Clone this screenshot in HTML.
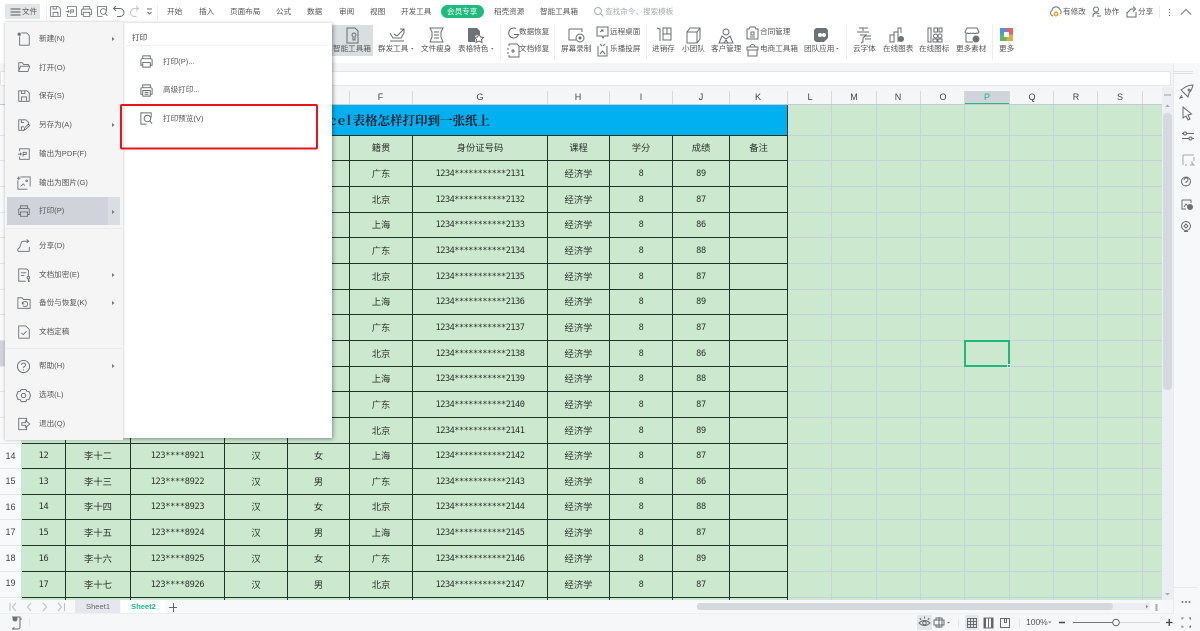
<!DOCTYPE html>
<html lang="zh"><head><meta charset="utf-8"><title>WPS 表格</title>
<style>
*{box-sizing:border-box}
html,body{margin:0;padding:0;width:1200px;height:631px;overflow:hidden;background:#f6f7f9;font-family:"Liberation Sans","Noto Sans CJK SC",sans-serif;color:#555}
#root{position:absolute;left:0;top:0;width:1200px;height:631px;overflow:hidden;filter:blur(.3px)}
.a{position:absolute}
.t{position:absolute;white-space:nowrap;line-height:12px;font-size:7.6px;color:#555}
#sheet{position:absolute;left:0;top:87px;width:1162px;height:513px;overflow:hidden}
table{position:absolute;left:22px;top:18px;border-collapse:separate;border-spacing:0;table-layout:fixed;width:666px;background:#cce8cf}
td{border-right:1px solid #1f3328;border-bottom:1px solid #1f3328;padding:0;text-align:center;font-size:9.3px;color:#2a332c;line-height:12px;overflow:hidden;white-space:nowrap}
td.n{font-family:"DejaVu Sans Mono",monospace;font-size:8.6px;letter-spacing:-.5px}
td.m{font-family:"DejaVu Sans Mono",monospace;font-size:8.6px;letter-spacing:-.3px}
.cap{position:absolute;top:4px;text-align:center;font-size:9px;line-height:12px;color:#444;transform:translateX(-50%)}
.rn{position:absolute;left:0;width:21px;text-align:center;font-size:9px;color:#444;line-height:12px}
svg{position:absolute;left:0;top:0;overflow:visible}
.i{fill:none;stroke:#686c71;stroke-width:1}
</style></head><body>
<div id="root">
<svg width="0" height="0" style="position:absolute">
<defs>
<symbol id="save" viewBox="0 0 16 16" overflow="visible"><path class="i" d="M2 2h9.500L14 4.500V14H2zM5 14V9h6v5M5 2v3h4V2"/></symbol>
<symbol id="print" viewBox="0 0 16 16" overflow="visible"><path class="i" d="M4 5V2h8v3M4 12H2V6.500Q2 5 3.500 5h9Q14 5 14 6.500V12h-2M4 9h8v5H4z"/></symbol>
<symbol id="prev" viewBox="0 0 16 16" overflow="visible"><path class="i" d="M13 7V2H2v12h6"/><circle class="i" cx="9" cy="8" r="3.500"/><path class="i" d="M11.500 10.500L14 13.500"/></symbol>
<symbol id="pdf" viewBox="0 0 16 16" overflow="visible"><path class="i" d="M3 5V2h11v12H3v-3M1 8h4M3.500 6.500L5 8l-1.500 1.500M7 11V6h3.500v2.500H7"/></symbol>
<symbol id="open" viewBox="0 0 16 16" overflow="visible"><path class="i" d="M2 13V3h4l1.500 2H13v2M2 13l2-6h10.500l-2 6z"/></symbol>
<symbol id="saveas" viewBox="0 0 16 16" overflow="visible"><path class="i" d="M8 14H2V2h8l3 3v2M5 14v-4h3M5 2v3h3M8 14l1-3 4-4 1.500 1.500-4 4z"/></symbol>
<symbol id="new" viewBox="0 0 16 16" overflow="visible"><path class="i" d="M5 1h6l3 3v11H3V5M1 1l3 3M4 1L1 4M2.500 .5v4M.5 2.500h4"/></symbol>
<symbol id="img" viewBox="0 0 16 16" overflow="visible"><path class="i" d="M4 1h11v11M1 5v10h11M4 12l3-3 2 2M11 4.500a1 1 0 1 0 .1 0M0 2.500h4M2 .5v4"/></symbol>
<symbol id="share" viewBox="0 0 16 16" overflow="visible"><path class="i" d="M1 14v-2q0-1.500 2-2l2-6q.5-1.500 3-1.500h5M11 .5L13.500 2.500 11 4.500M14 9v5H1"/></symbol>
<symbol id="lock" viewBox="0 0 16 16" overflow="visible"><path class="i" d="M10 15H2V1h9l2 2v6M4.500 5.500h6M4.500 8.500h4"/><circle class="i" cx="13" cy="11" r="1.500"/><path class="i" d="M13 12.500V15.500h1.500M13 14h1.500"/></symbol>
<symbol id="bak" viewBox="0 0 16 16" overflow="visible"><path class="i" d="M1 14V2h5l1.500 2H15v10zM6 6.500v2.500h2.500M6.200 9a3 3 0 1 1 .6 2"/></symbol>
<symbol id="final" viewBox="0 0 16 16" overflow="visible"><path class="i" d="M2 1h8l4 4v10H2zM5 9l2 2 4-4"/></symbol>
<symbol id="help" viewBox="0 0 16 16" overflow="visible"><circle class="i" cx="8" cy="8" r="6.500"/><path class="i" d="M5.800 6.300Q6 4.300 8 4.300q2.200 0 2.200 2 0 1.200-1.200 1.800-1 .5-1 1.600M8 11v1.200"/></symbol>
<symbol id="gear" viewBox="0 0 16 16" overflow="visible"><path class="i" d="M5.500 1.500h5l1 2 2.300.2L15.500 8l-1.700 4.300-2.300.2-1 2h-5l-1-2-2.300-.2L.5 8l1.700-4.300 2.300-.2z"/><circle class="i" cx="8" cy="8" r="2.300"/></symbol>
<symbol id="exit" viewBox="0 0 16 16" overflow="visible"><path class="i" d="M11 5V1.500H2v13h9V11M5.500 6.500h4.500V4l4.500 4-4.500 4V9.500H5.500z"/></symbol>
<symbol id="adv" viewBox="0 0 16 16" overflow="visible"><path class="i" d="M4 5V2h8v3M4 12H2V6.500Q2 5 3.500 5h9Q14 5 14 6.500V12h-2M4 8h8v6H4zM6 10h4M6 12h4"/></symbol>
</defs></svg>

<!-- SHEET -->
<div id="sheet">
<div class="a" style="left:0;top:0;width:1162px;height:18px;background:#f5f6f7"></div>
<div class="a" style="left:0;top:18px;width:21px;height:495px;background:#f8f9fa"></div>
<div class="a" style="left:21px;top:18px;width:1141px;height:495px;background:#cce8cf"></div>
<div class="a" style="left:0;top:253px;width:21px;height:26px;background:#d0d3da"></div>
<div class="a" style="left:965px;top:4px;width:44px;height:13px;background:#d0d3da"></div>
<div class="a" style="left:965px;top:16px;width:44px;height:2px;background:#1fbb7d"></div>
<div class="cap" style="left:380.500px">F</div><div class="cap" style="left:480px">G</div><div class="cap" style="left:578px">H</div><div class="cap" style="left:641px">I</div><div class="cap" style="left:701px">J</div><div class="cap" style="left:758px">K</div><div class="cap" style="left:810px">L</div><div class="cap" style="left:854px">M</div><div class="cap" style="left:898px">N</div><div class="cap" style="left:943px">O</div><div class="cap" style="left:987px;color:#1fbb7d">P</div><div class="cap" style="left:1032px">Q</div><div class="cap" style="left:1076px">R</div><div class="cap" style="left:1120px">S</div>

<svg width="1162" height="513" viewBox="0 87 1162 513">
<g stroke="#d5d8dd" stroke-width="1">
<path d="M349.500 91v13M412.500 91v13M547.500 91v13M609.500 91v13M672.500 91v13M729.500 91v13M787.500 91v13M831.500 91v13M876.500 91v13M920.500 91v13M964.500 91v13M1009.500 91v13M1053.500 91v13M1097.500 91v13M1142.500 91v13"/>
<path d="M0 104.500h1162" stroke="#c4c9d2"/>
<path d="M0 135.500h21M0 160.500h21M0 186.500h21M0 212.500h21M0 237.500h21M0 263.500h21M0 289.500h21M0 314.500h21M0 340.500h21M0 366.500h21M0 391.500h21M0 417.500h21M0 443.500h21M0 468.500h21M0 494.500h21M0 519.500h21M0 545.500h21M0 571.500h21M0 597.500h21" stroke="#e4e6e9"/>
</g>
<g stroke="#c5d2dd" stroke-width="1">
<path d="M831.500 105v495M876.500 105v495M920.500 105v495M964.500 105v495M1009.500 105v495M1053.500 105v495M1097.500 105v495M1142.500 105v495"/>
<path d="M788 135.500h374M788 160.500h374M788 186.500h374M788 212.500h374M788 237.500h374M788 263.500h374M788 289.500h374M788 314.500h374M788 340.500h374M788 366.500h374M788 391.500h374M788 417.500h374M788 443.500h374M788 468.500h374M788 494.500h374M788 519.500h374M788 545.500h374M788 571.500h374M788 597.500h374"/>
</g>
</svg>

<table>
<colgroup><col style="width:44px"><col style="width:65px"><col style="width:94px"><col style="width:63px"><col style="width:62px"><col style="width:63px"><col style="width:135px"><col style="width:62px"><col style="width:63px"><col style="width:57px"><col style="width:58px"></colgroup>
<tr style="height:31px"><td colspan="11" style="background:#00b0f0"></td></tr>
<tr style="height:25px"><td></td><td></td><td></td><td></td><td></td><td>籍贯</td><td>身份证号码</td><td>课程</td><td>学分</td><td>成绩</td><td>备注</td></tr>
<tr style="height:26px"><td></td><td></td><td></td><td></td><td></td><td>广东</td><td class="n">1234***********2131</td><td>经济学</td><td class="m">8</td><td class="m">89</td><td></td></tr>
<tr style="height:26px"><td></td><td></td><td></td><td></td><td></td><td>北京</td><td class="n">1234***********2132</td><td>经济学</td><td class="m">8</td><td class="m">87</td><td></td></tr>
<tr style="height:25px"><td></td><td></td><td></td><td></td><td></td><td>上海</td><td class="n">1234***********2133</td><td>经济学</td><td class="m">8</td><td class="m">86</td><td></td></tr>
<tr style="height:26px"><td></td><td></td><td></td><td></td><td></td><td>广东</td><td class="n">1234***********2134</td><td>经济学</td><td class="m">8</td><td class="m">88</td><td></td></tr>
<tr style="height:26px"><td></td><td></td><td></td><td></td><td></td><td>北京</td><td class="n">1234***********2135</td><td>经济学</td><td class="m">8</td><td class="m">87</td><td></td></tr>
<tr style="height:25px"><td></td><td></td><td></td><td></td><td></td><td>上海</td><td class="n">1234***********2136</td><td>经济学</td><td class="m">8</td><td class="m">89</td><td></td></tr>
<tr style="height:26px"><td></td><td></td><td></td><td></td><td></td><td>广东</td><td class="n">1234***********2137</td><td>经济学</td><td class="m">8</td><td class="m">87</td><td></td></tr>
<tr style="height:26px"><td></td><td></td><td></td><td></td><td></td><td>北京</td><td class="n">1234***********2138</td><td>经济学</td><td class="m">8</td><td class="m">86</td><td></td></tr>
<tr style="height:25px"><td></td><td></td><td></td><td></td><td></td><td>上海</td><td class="n">1234***********2139</td><td>经济学</td><td class="m">8</td><td class="m">88</td><td></td></tr>
<tr style="height:26px"><td></td><td></td><td></td><td></td><td></td><td>广东</td><td class="n">1234***********2140</td><td>经济学</td><td class="m">8</td><td class="m">87</td><td></td></tr>
<tr style="height:26px"><td></td><td></td><td></td><td></td><td></td><td>北京</td><td class="n">1234***********2141</td><td>经济学</td><td class="m">8</td><td class="m">89</td><td></td></tr>
<tr style="height:25px"><td class="m">12</td><td>李十二</td><td class="m">123****8921</td><td>汉</td><td>女</td><td>上海</td><td class="n">1234***********2142</td><td>经济学</td><td class="m">8</td><td class="m">87</td><td></td></tr>
<tr style="height:26px"><td class="m">13</td><td>李十三</td><td class="m">123****8922</td><td>汉</td><td>男</td><td>广东</td><td class="n">1234***********2143</td><td>经济学</td><td class="m">8</td><td class="m">86</td><td></td></tr>
<tr style="height:25px"><td class="m">14</td><td>李十四</td><td class="m">123****8923</td><td>汉</td><td>女</td><td>北京</td><td class="n">1234***********2144</td><td>经济学</td><td class="m">8</td><td class="m">88</td><td></td></tr>
<tr style="height:26px"><td class="m">15</td><td>李十五</td><td class="m">123****8924</td><td>汉</td><td>男</td><td>上海</td><td class="n">1234***********2145</td><td>经济学</td><td class="m">8</td><td class="m">87</td><td></td></tr>
<tr style="height:26px"><td class="m">16</td><td>李十六</td><td class="m">123****8925</td><td>汉</td><td>女</td><td>广东</td><td class="n">1234***********2146</td><td>经济学</td><td class="m">8</td><td class="m">89</td><td></td></tr>
<tr style="height:26px"><td class="m">17</td><td>李十七</td><td class="m">123****8926</td><td>汉</td><td>男</td><td>北京</td><td class="n">1234***********2147</td><td>经济学</td><td class="m">8</td><td class="m">87</td><td></td></tr>
<tr style="height:26px"><td></td><td></td><td></td><td></td><td></td><td></td><td></td><td></td><td></td><td></td><td></td></tr>
</table>
<div class="a" style="left:200px;width:290px;text-align:right;top:24px;white-space:nowrap;font-family:'Noto Serif CJK SC','Liberation Serif',serif;font-weight:700;font-size:12.500px;line-height:18px;color:#0b1a22"><span style="letter-spacing:1.600px">Excel</span>表格怎样打印到一张纸上</div>
<div class="a" style="left:964px;top:253px;width:46px;height:27px;border:2px solid #1db87b"></div>
<div class="a" style="left:1007px;top:277px;width:4px;height:4px;background:#1db87b;border:1px solid #dff3e5"></div>
<div class="rn" style="top:363px">14</div><div class="rn" style="top:388px">15</div><div class="rn" style="top:414px">16</div><div class="rn" style="top:439px">17</div><div class="rn" style="top:465px">18</div><div class="rn" style="top:490px">19</div>
</div>

<!-- TOP AREA -->
<div class="a" style="left:0;top:0;width:1200px;height:63px;background:#fff;box-shadow:0 1px 2px rgba(0,0,0,.12)"></div>
<div class="a" style="left:0;top:63px;width:1200px;height:27px;background:#f4f5f7"></div>
<div class="a" style="left:0;top:71px;width:1171px;height:15px;background:#fff;border:1px solid #e3e5e9;border-radius:2px"></div>
<div class="a" style="left:5px;top:4px;width:35px;height:15px;background:#e3e6e9;border-radius:1px"></div>
<div class="a" style="left:331px;top:25px;width:42px;height:31px;background:#d9dee1"></div>
<div class="a" style="left:441px;top:5px;width:43px;height:13px;background:#1fbb7d;border-radius:7px"></div>

<div class="t" style="left:22px;top:6px">文件</div>
<div class="t" style="left:167px;top:6px">开始</div><div class="t" style="left:199px;top:6px">插入</div><div class="t" style="left:230px;top:6px">页面布局</div><div class="t" style="left:276px;top:6px">公式</div><div class="t" style="left:307px;top:6px">数据</div><div class="t" style="left:339px;top:6px">审阅</div><div class="t" style="left:370px;top:6px">视图</div><div class="t" style="left:401px;top:6px">开发工具</div>
<div class="t" style="left:447px;top:6px;color:#fff">会员专享</div>
<div class="t" style="left:494px;top:6px">稻壳资源</div><div class="t" style="left:540px;top:6px">智能工具箱</div>
<div class="t" style="left:605px;top:6px;color:#a9adb3">查找命令、搜索模板</div>
<div class="t" style="left:1063px;top:6px">有修改</div><div class="t" style="left:1104px;top:6px">协作</div><div class="t" style="left:1138px;top:6px">分享</div>

<div class="t" style="left:333px;top:43px">智能工具箱</div><div class="t" style="left:378px;top:43px">群发工具</div><div class="t" style="left:421px;top:43px">文件瘦身</div><div class="t" style="left:458px;top:43px">表格特色</div>
<div class="t" style="left:519px;top:26px">数据恢复</div><div class="t" style="left:519px;top:43px">文档修复</div>
<div class="t" style="left:561px;top:43px">屏幕录制</div>
<div class="t" style="left:610px;top:26px">远程桌面</div><div class="t" style="left:610px;top:43px">乐播投屏</div>
<div class="t" style="left:652px;top:43px">进销存</div><div class="t" style="left:682px;top:43px">小团队</div><div class="t" style="left:711px;top:43px">客户管理</div>
<div class="t" style="left:760px;top:26px">合同管理</div><div class="t" style="left:760px;top:43px">电商工具箱</div>
<div class="t" style="left:804px;top:43px">团队应用</div><div class="t" style="left:853px;top:43px">云字体</div><div class="t" style="left:883px;top:43px">在线图表</div><div class="t" style="left:919px;top:43px">在线图标</div><div class="t" style="left:956px;top:43px">更多素材</div><div class="t" style="left:999px;top:43px">更多</div>

<svg width="1200" height="64">
<path d="M10.500 9h10M10.500 12h10M10.500 15h10" stroke="#555" fill="none"/>
<path d="M46.500 5v15M157.500 5v15M500.500 24v36M554.500 24v36M646.500 24v36M846.500 24v36M992.500 24v36M1159.500 6v12" stroke="#eceef0" fill="none"/>
<use href="#save" x="49" y="5" width="13" height="13"/><use href="#pdf" x="65" y="5" width="13" height="13"/><use href="#print" x="80" y="5" width="13" height="13"/><use href="#prev" x="96" y="5" width="13" height="13"/>
<path class="i" d="M114 8.500h6a3.500 3.500 0 0 1 0 8h-3M116 6l-2.500 2.500L116 11"/>
<path d="M138 8.500h-3.500a3.500 3.500 0 0 0 0 8h2M136 6l2.500 2.500L136 11" fill="none" stroke="#c3c6ca"/>
<path class="i" d="M147 9h5M147.500 12l2 2 2-2" stroke-width=".8"/>
<circle class="i" cx="598" cy="11" r="3.500" style="stroke:#a9adb3"/><path d="M600.500 13.500l3 3" stroke="#a9adb3"/>
<path class="i" d="M1053 16a3 3 0 0 1-1-5.500 4 4 0 0 1 7.500-1.500 3.500 3.500 0 0 1 1 5"/><circle cx="1056" cy="14" r="2.500" fill="#f5a623"/><circle cx="1056" cy="14" r="1" fill="#fff"/>
<circle class="i" cx="1096" cy="9.500" r="2.500"/><path class="i" d="M1093 17v-1q0-3 3-3 2 0 3 1M1097 16h4"/>
<path class="i" d="M1127 12v5h9v-5M1127 13l4-4h3M1133 6.500l2.500 2.500-2.500 2.500"/>
<path d="M1169.500 9v1M1169.500 12v1M1169.500 15v1" stroke="#777"/><path d="M1181 14.500l5-5 5 5" fill="none" stroke="#777"/>

<!-- ribbon -->
<g transform="translate(346,27)"><path class="i" d="M1 1h8l3 3v12H1zM6 8a2 2 0 1 1 4 0q0 1-1 1.500V13H7V9.500Q6 9 6 8z"/></g>
<g transform="translate(389,27)"><path class="i" d="M1 6l3 5h8l3-5M1 14h14M5 7l3 2 7-7M11 2h4v4"/></g>
<g transform="translate(429,27)"><path class="i" d="M1 1h13l-2 4v5l2 5H1l2-5V5zM5 5h5M5 8h5M5 11h5"/></g>
<g transform="translate(467,27)"><path d="M1 1h9l3 3v3l-5 2v6H1z" fill="#6e7378"/><path class="i" d="M12 7l1.500 3 3 .5-2 2 .5 3-3-1.500-3 1.500.5-3-2-2 3-.5z"/></g>
<g transform="translate(506,27)"><path class="i" d="M10 1.500a5 5 0 1 0 2.500 6H8"/></g>
<g transform="translate(506,43)"><path class="i" d="M3 3V1h8l2 2v11H3v-2M5 8h4M7 6v4M1 6h2M1 10h2"/></g>
<g transform="translate(568,27)"><path class="i" d="M1 2h13v3M1 2v11h7"/><circle class="i" cx="12" cy="11" r="4"/><circle cx="12" cy="11" r="1.500" fill="#62666b"/></g>
<g transform="translate(596,26)"><path class="i" d="M1 1h11v9H8l-1 2-1-2H1zM4 6l3-2M5 4h2v2"/></g>
<g transform="translate(596,43)"><path class="i" d="M2 3v10h9V3M4 1l2 2M9 1L7 3M4 11l2.500-3L9 11"/></g>
<g transform="translate(656,27)"><path class="i" d="M1 1l3 1v12M7 1h8v12H7zM7 7h8M11 1v6"/></g>
<g transform="translate(686,27)"><path class="i" d="M1 5l3-4h10v11l-3 4H1zM1 5h10v11M11 5l3-4"/></g>
<g transform="translate(718,27)"><circle class="i" cx="8" cy="5" r="3"/><path class="i" d="M1 16l3-7 4 3 4-3 3 7zM6 16l2-3 2 3"/></g>
<g transform="translate(746,26)"><path class="i" d="M1 3h2l1-2h5l1 2h2v10H1zM5 6h3v3H5zM4 11h5"/></g>
<g transform="translate(746,43)"><path class="i" d="M1 4h11v3H1zM2 7v6h9V7M4 4a2.500 2.500 0 0 1 5 0"/></g>
<g transform="translate(813,27)"><path d="M1 3l2-2h10l2 2v8l-4 4H3l-2-2z" fill="#6e7378"/><circle cx="7" cy="8" r="2" fill="#fff"/><circle cx="11" cy="8" r="2" fill="#fff"/></g>
<g transform="translate(856,27)"><path class="i" d="M3 1h9M1 5h12M7 1v3M4 8h6L7 11v4l-2 1M9 9h6M9 12h6"/></g>
<g transform="translate(889,27)"><path class="i" d="M1 15V8h4v7zM5 15V5h4v10M9 6V1h3v5"/><circle cx="12" cy="12" r="3" fill="#6e7378"/></g>
<g transform="translate(927,27)"><path class="i" d="M1 1h3v14H1zM7 1h3.500v4H7zM12 1h3v4h-3z"/><circle class="i" cx="8.500" cy="9" r="2"/><circle class="i" cx="13" cy="9" r="2"/><path class="i" d="M6 15h4v-3H6zM11 15h4v-3h-4z"/></g>
<g transform="translate(964,27)"><path class="i" d="M1 5l2-4h10l2 4q-1 2-2.500 1Q11 7 9.500 6 8 7 6.500 6 5 7 3.500 6 2 7 1 5zM2 7v8h7"/><circle cx="12" cy="12" r="3.500" fill="#6e7378"/></g>
<rect x="1000" y="28" width="6.500" height="6.500" fill="#4e8fe8"/><rect x="1006.500" y="28" width="6.500" height="6.500" fill="#e8635a"/><rect x="1000" y="34.500" width="6.500" height="6.500" fill="#5cb56a"/><rect x="1006.500" y="34.500" width="6.500" height="6.500" fill="#e8a94a"/><rect x="1004" y="32" width="5" height="5" fill="#fff"/>
<path d="M411 48h2.500l-1.250 1.500zM491 48h2.500l-1.250 1.500zM836 48h2.500l-1.250 1.500z" fill="#666"/>
</svg>

<!-- RIGHT SIDEBAR -->
<div class="a" style="left:1173px;top:63px;width:27px;height:551px;background:#f7f8fa;border-left:1px solid #e9eaee"></div>
<div class="a" style="left:1162px;top:87px;width:11px;height:513px;background:#eceef3"></div>
<div class="a" style="left:1163px;top:113px;width:9px;height:277px;background:#d5d8dd;border-radius:4px"></div>
<div class="a" style="left:1164px;top:94px;width:7px;height:2px;background:#c3c6cb"></div>
<svg width="1200" height="631">
<path d="M1165 107l2.500-2.500 2.500 2.500zM1165 593l2.500 2.500 2.500-2.500z" fill="#a9adb3"/>
<path d="M1173 71.500h20M1173 73.500h20" stroke="#dfe1e5"/>
<path d="M1174 587.500h24" stroke="#e6e8ec"/>
<g transform="translate(1179,84)"><path class="i" d="M5 4q4-3 9-3-1 5-4 8l-1 4-2-2-3-3-2-2zM3 11l-2 3 3-1M10 5a1 1 0 1 0 .1 0"/></g>
<path class="i" d="M1183 107l8.500 7-3.500 1 2 4-2 1-2-4-3 2z"/>
<path class="i" d="M1182 133.500h1.500M1187 133.500h7M1182 138.500h7M1192 138.500h2"/><circle class="i" cx="1185" cy="133.500" r="1.500"/><circle class="i" cx="1190.500" cy="138.500" r="1.500"/>
<path d="M1183 155h11M1183 155v10M1185 165h2M1194 157v4M1190 165h4l-2-2M1192 161v3" fill="none" stroke="#a5a8ad"/>
<circle class="i" cx="1186" cy="181.500" r="4.500"/><path class="i" d="M1184 180q.5-2 2-2 2 0 2 1.500t-2 2.500v1M1186 185v.6"/>
<path class="i" d="M1182 200h9v3M1182 200v9h4M1184 207l2-3 2 2"/><circle cx="1190" cy="207" r="3" fill="#6e7378"/>
<circle class="i" cx="1186" cy="226" r="4.500"/><path class="i" d="M1184 231.500h4M1186 224l2 2-2 2-2-2z"/>
<circle cx="1182.500" cy="602" r="1" fill="#777"/><circle cx="1186" cy="602" r="1" fill="#777"/><circle cx="1189.500" cy="602" r="1" fill="#777"/>
</svg>

<!-- SHEET TABS / STATUS -->
<div class="a" style="left:0;top:600px;width:1162px;height:14px;background:#f7f8fa"></div>
<div class="a" style="left:75px;top:600px;width:45px;height:13px;background:#e6e7ee"></div>
<div class="a" style="left:121px;top:600px;width:44px;height:13px;background:#fff"></div>
<div class="t" style="left:86px;top:601px;color:#666;font-size:7.600px">Sheet1</div>
<div class="t" style="left:131px;top:601px;color:#1fbb7d;font-size:7.600px;font-weight:700">Sheet2</div>
<div class="a" style="left:697px;top:603px;width:453px;height:7px;background:#eceef3"></div>
<div class="a" style="left:697px;top:603px;width:416px;height:7px;background:#d5d8dd;border-radius:3px"></div>
<div class="a" style="left:0;top:613px;width:1173px;height:1px;background:#eceef0"></div>
<div class="t" style="left:1026px;top:616px;font-size:8.500px">100%</div>
<svg width="1200" height="631">
<path d="M10 603v8M16 603l-3.500 4 3.500 4M31 603l-3.500 4 3.500 4M43 603l3.500 4-3.500 4M58 603l3.500 4-3.500 4M64.500 603v8" fill="none" stroke="#bcc0c6"/>
<path d="M169 607.500h8M173.500 603v9" stroke="#666"/>
<path d="M1146 604.500l2 2-2 2z" fill="#888"/><path d="M1156.500 604v7" stroke="#aaa" stroke-width="2"/>
<g transform="translate(10,616)"><path class="i" d="M2 1h8v10a2 2 0 0 1-2 2H2a2 2 0 0 0 2-2M10 3h2"/><circle cx="5" cy="3" r="2.500" fill="#6e7378"/></g>
<path d="M29.500 618v8" stroke="#e3e5e8"/>
<rect x="917" y="615" width="15" height="15" fill="#e3e6ea"/>
<path class="i" d="M919 623q5.500-5 11 0-5.500 5-11 0z"/><circle class="i" cx="924.500" cy="623" r="1.800"/><path class="i" d="M920 618l1 2M924.500 616.500v2M929 618l-1 2"/>
<path class="i" d="M934 620h10v5h-10zM936 620v-2h6v9h-6v-2M939 617v11"/><path d="M947 622h3l-1.500 1.500z" fill="#666"/>
<path d="M958.500 618v9M1019.500 618v9" stroke="#e3e5e8"/>
<rect x="965" y="615" width="14" height="15" fill="#e3e6ea"/>
<path class="i" d="M967.500 618.500h9v9h-9zM967.500 621.500h9M967.500 624.500h9M970.500 618.500v9M973.500 618.500v9"/>
<path class="i" d="M984 618h9v10h-9zM988.500 618v10"/><path d="M984 618h2v10h-2zM991 618h2v10h-2z" fill="#62666b"/>
<path class="i" d="M1000.500 618.500h9v9h-9zM1004.500 618.500v4h2v-4"/>
<path d="M1048 621.500h3.500l-1.750 1.800z" fill="#777"/>
<path d="M1059 622.500h6" stroke="#444" stroke-width="1.500"/>
<path d="M1073 622.500h43" stroke="#777"/><path d="M1116 622.500h44" stroke="#d5d8dd"/>
<circle cx="1116" cy="622.500" r="3.300" fill="#f6f7f9" stroke="#666"/>
<path d="M1166 622.500h6.500M1169.250 619v7" stroke="#444" stroke-width="1.300"/>
<path class="i" d="M1182 619.500v-1.500h1.500M1189 618h1.500v1.500M1182 625.500v1.500h1.500M1190.500 625.500v1.500H1189"/>
</svg>

<!-- FILE MENU -->
<div class="a" style="left:122px;top:23px;width:210px;height:415px;background:#fff;box-shadow:1px 1px 4px rgba(0,0,0,.4)"></div>
<div class="a" style="left:5px;top:22px;width:118px;height:418px;background:#f5f5f5;box-shadow:0 0 3px rgba(0,0,0,.25)"></div>
<div class="a" style="left:7px;top:197px;width:101px;height:28px;background:#d0d4da"></div>
<div class="a" style="left:108px;top:197px;width:12px;height:28px;background:#dadde2"></div>
<div class="a" style="left:6px;top:228px;width:116px;height:1px;background:#eaeaea"></div>
<div class="a" style="left:6px;top:348px;width:116px;height:1px;background:#eaeaea"></div>
<div class="a" style="left:126px;top:45px;width:202px;height:1px;background:#f1f1f1"></div>

<div class="t" style="left:39px;top:33px">新建(N)</div>
<div class="t" style="left:39px;top:62px">打开(O)</div>
<div class="t" style="left:39px;top:90px">保存(S)</div>
<div class="t" style="left:39px;top:119px">另存为(A)</div>
<div class="t" style="left:39px;top:148px">输出为PDF(F)</div>
<div class="t" style="left:39px;top:177px">输出为图片(G)</div>
<div class="t" style="left:39px;top:205px">打印(P)</div>
<div class="t" style="left:39px;top:240px">分享(D)</div>
<div class="t" style="left:39px;top:269px">文档加密(E)</div>
<div class="t" style="left:39px;top:297px">备份与恢复(K)</div>
<div class="t" style="left:39px;top:326px">文档定稿</div>
<div class="t" style="left:39px;top:360px">帮助(H)</div>
<div class="t" style="left:39px;top:389px">选项(L)</div>
<div class="t" style="left:39px;top:418px">退出(Q)</div>
<div class="t" style="left:132px;top:32px;color:#444">打印</div>
<div class="t" style="left:163px;top:56px">打印(P)...</div>
<div class="t" style="left:163px;top:84px">高级打印...</div>
<div class="t" style="left:163px;top:113px">打印预览(V)</div>

<svg width="400" height="450">
<use href="#new" x="17" y="32" width="14" height="14"/>
<use href="#open" x="17" y="60" width="14" height="14"/>
<use href="#save" x="17" y="89" width="14" height="14"/>
<use href="#saveas" x="17" y="118" width="14" height="14"/>
<use href="#pdf" x="17" y="147" width="14" height="14"/>
<use href="#img" x="17" y="176" width="14" height="14"/>
<use href="#print" x="17" y="204" width="14" height="14"/>
<use href="#share" x="17" y="239" width="14" height="14"/>
<use href="#lock" x="17" y="268" width="14" height="14"/>
<use href="#bak" x="17" y="296" width="14" height="14"/>
<use href="#final" x="17" y="325" width="14" height="14"/>
<use href="#help" x="16" y="359" width="15" height="15"/>
<use href="#gear" x="16" y="388" width="15" height="15"/>
<use href="#exit" x="17" y="417" width="14" height="14"/>
<use href="#print" x="139" y="54" width="15" height="15"/>
<use href="#adv" x="139" y="83" width="15" height="15"/>
<use href="#prev" x="139" y="111" width="15" height="15"/>
<path d="M112 37v4l2.500-2zM112 123v4l2.500-2zM112 210v4l2.500-2zM112 273v4l2.500-2zM112 301v4l2.500-2zM112 364v4l2.500-2z" fill="#777"/>
<rect x="121" y="105" width="196" height="43.500" rx="1" fill="none" stroke="#e8141c" stroke-width="2"/>
</svg>
</div>
</body></html>
